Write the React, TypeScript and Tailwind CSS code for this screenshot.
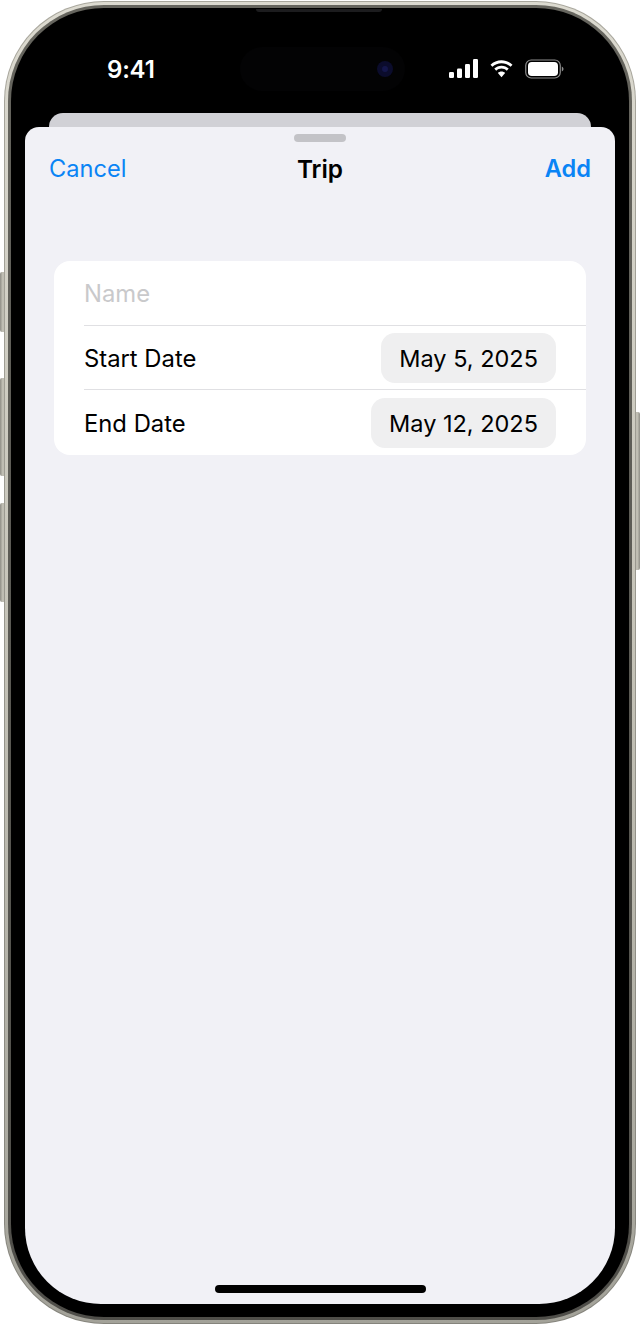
export default function App() {
  const font = { fontFamily: "Inter, 'Noto Sans', sans-serif" };
  return (
    <div className="relative w-[640px] h-[1326px] bg-white overflow-hidden" style={font}>
      {/* side buttons */}
      <div className="absolute left-0 top-[272px] w-[6px] h-[60px] rounded-l-[2px] bg-gradient-to-r from-[#8f8e86] via-[#c9c7bc] to-[#8f8e86]" />
      <div className="absolute left-0 top-[378px] w-[6px] h-[98px] rounded-l-[2px] bg-gradient-to-r from-[#8f8e86] via-[#c9c7bc] to-[#8f8e86]" />
      <div className="absolute left-0 top-[503px] w-[6px] h-[99px] rounded-l-[2px] bg-gradient-to-r from-[#8f8e86] via-[#c9c7bc] to-[#8f8e86]" />
      <div className="absolute right-0 top-[412px] w-[6px] h-[158px] rounded-r-[2px] bg-gradient-to-l from-[#8f8e86] via-[#c9c7bc] to-[#8f8e86]" />

      <div className="relative ml-[4px] mt-[1px] w-[632px] h-[1323px] rounded-[100px] p-[1px] bg-gradient-to-b from-[#a9a79d] to-[#85847c]">
        <div className="h-full rounded-[99px] p-[3px] bg-gradient-to-b from-[#dcdad0] via-[#c4c2b7] to-[#a3a299]">
          <div className="h-full rounded-[96px] p-[3px] bg-gradient-to-b from-[#66655e] to-[#4f4e49]">
            <div className="relative h-full rounded-[93px] bg-black px-[14px] pb-[13px] flex flex-col">
              {/* top speaker */}
              <div className="absolute left-[245px] top-[1px] w-[126px] h-[3px] rounded-b-[3px] bg-[#1c1c1e]" />
              {/* status bar */}
              <div className="h-[105px] shrink-0 relative flex items-start justify-between">
                <div className="ml-[82px] mt-[47px] text-[24px] leading-[30px] font-semibold text-white tracking-[-0.2px]">9:41</div>
                {/* island */}
                <div className="absolute left-[215px] top-[39px] w-[165px] h-[44px] rounded-full bg-[#030304]" />
                <div className="absolute left-[352px] top-[53px] w-[16px] h-[16px] rounded-full bg-[#0b0c2c] flex items-center justify-center">
                  <div className="w-[6px] h-[6px] rounded-full bg-[#14164a]" />
                </div>
                <div className="mr-[51px] mt-[51px] flex items-center gap-[11px]">
                  <svg width="29" height="20" viewBox="0 0 29 20" fill="white">
                    <rect x="0" y="13" width="5" height="6" rx="1.2" />
                    <rect x="8" y="9.5" width="5" height="9.5" rx="1.2" />
                    <rect x="16" y="5" width="5" height="14" rx="1.2" />
                    <rect x="24" y="0" width="5" height="19" rx="1.2" />
                  </svg>
                  <svg width="25" height="19" viewBox="0 0 25 19" fill="white">
                    <path d="M12.5 3.2c3.5 0 6.7 1.4 9.1 3.6l1.9-2.1C20.6 2 16.7.3 12.5.3S4.4 2 1.5 4.7l1.9 2.1c2.4-2.2 5.6-3.6 9.1-3.6z" />
                    <path d="M12.5 8.6c2 0 3.9.8 5.3 2.1l1.9-2.1c-1.9-1.8-4.4-2.9-7.2-2.9s-5.3 1.1-7.2 2.9l1.9 2.1c1.4-1.3 3.3-2.1 5.3-2.1z" />
                    <path d="M12.5 11.5c-1.4 0-2.7.6-3.6 1.4l3.6 4.4 3.6-4.4c-.9-.8-2.2-1.4-3.6-1.4z" />
                  </svg>
                  <svg width="39" height="20" viewBox="0 0 39 20" fill="none">
                    <rect x="0.75" y="1" width="34.5" height="18" rx="5.5" stroke="#8e8e8e" strokeWidth="1.2" />
                    <rect x="3" y="3" width="30" height="14" rx="3.8" fill="white" />
                    <path d="M36.8 7.5c1 .4 1.7 1.4 1.7 2.5s-.7 2.1-1.7 2.5z" fill="#8e8e8e" />
                  </svg>
                </div>
              </div>
              {/* stacked card behind */}
              <div className="h-[14px] shrink-0 mx-[24px] rounded-t-[14px] bg-[#d1d1d6]" />
              {/* sheet */}
              <div className="relative flex-1 rounded-t-[14px] rounded-b-[76px] bg-[#f1f1f6] overflow-hidden">
                <div className="mx-auto mt-[7px] w-[52px] h-[8px] rounded-full bg-[#c3c3c7]" />
                <div className="mt-[10px] pt-[2px] px-[24px] h-[32px] flex items-center justify-between relative">
                  <span className="text-[23.6px] text-[#0a84f5]">Cancel</span>
                  <span className="absolute left-0 right-0 text-center text-[24.3px] font-semibold text-black">Trip</span>
                  <span className="text-[23.6px] font-semibold text-[#0a84f5]">Add</span>
                </div>
                <div className="mt-[77px] mx-[29px] rounded-[16px] bg-white overflow-hidden">
                  <div className="h-[64px] pt-[2px] pl-[30px] flex items-center text-[23.8px] text-[#c9c9cb]">Name</div>
                  <div className="ml-[30px] h-px bg-[#e0e0e3]" />
                  <div className="h-[63px] pl-[30px] pr-[30px] flex items-center justify-between text-[23.8px] text-black">
                    <span className="pt-[2px]">Start Date</span>
                    <span className="h-[50px] pt-[2px] px-[18px] flex items-center rounded-[14px] bg-[#efeff0] text-[23.5px]">May 5, 2025</span>
                  </div>
                  <div className="ml-[30px] h-px bg-[#e0e0e3]" />
                  <div className="h-[65px] pl-[30px] pr-[30px] flex items-center justify-between text-[23.8px] text-black">
                    <span className="pt-[2px]">End Date</span>
                    <span className="h-[50px] pt-[2px] px-[18px] flex items-center rounded-[14px] bg-[#efeff0] text-[23.5px]">May 12, 2025</span>
                  </div>
                </div>
                <div className="absolute left-[190px] bottom-[11px] w-[211px] h-[8px] rounded-full bg-black" />
              </div>
            </div>
          </div>
        </div>
      </div>
    </div>
  );
}
